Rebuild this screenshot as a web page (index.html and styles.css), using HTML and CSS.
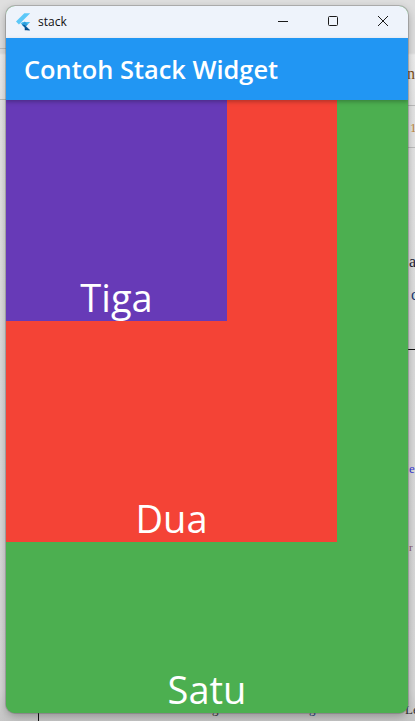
FILE: index.html
```html
<!DOCTYPE html>
<html lang="id">
<head>
<meta charset="utf-8">
<title>stack</title>
<link rel="stylesheet" href="styles.css">
</head>
<body>
<div class="desktop">
  <div class="back-line back-line-top"></div>
  <div class="back-line back-line-mid"></div>
  <div class="back-line back-line-left-a"></div>
  <div class="back-line back-line-left-b"></div>
  <div class="back-line-dark back-line-rule"></div>
  <div class="back-line-vert"></div>
  <span class="back-text back-n">n</span>
  <span class="back-text back-one">1</span>
  <span class="back-text back-a">a</span>
  <span class="back-text back-c">c</span>
  <span class="back-text back-e">e</span>
  <span class="back-text back-r">r</span>
  <span class="back-text back-le">Le</span>
  <span class="back-text back-g1">g</span>
  <span class="back-text back-g2">g</span>

  <main class="window">
    <header class="titlebar">
      <div class="title-left">
        <svg class="flutter-logo" viewBox="0 0 18 21" width="15" height="18" aria-hidden="true">
          <polygon points="0,10 10,0 17,0 3.5,13.5" fill="#5cc8f8"/>
          <polygon points="8,10.5 17,10.5 10.5,17 7,13.5 5.5,12" fill="#4dbdf0"/>
          <polygon points="7,13.5 10.5,10 14,13.5 10.5,17" fill="#2f9fdc"/>
          <polygon points="7,13.5 10.5,17 14,20.5 17,20.5 10.5,14" fill="#0d5f9e"/>
          <polygon points="10.5,17 17,20.5 10.5,20.5" fill="#0a4d87"/>
        </svg>
        <span class="app-name">stack</span>
      </div>
      <div class="controls">
        <svg class="control" viewBox="0 0 50 32" width="50" height="32" aria-hidden="true"><path d="M20 15.5H30" stroke="#1a1a1a" fill="none"/></svg>
        <svg class="control" viewBox="0 0 50 32" width="50" height="32" aria-hidden="true"><rect x="20.5" y="10.5" width="9" height="9" rx="1" stroke="#1a1a1a" fill="none"/></svg>
        <svg class="control" viewBox="0 0 50 32" width="50" height="32" aria-hidden="true"><path d="M20 10L30 20M30 10L20 20" stroke="#1a1a1a" fill="none"/></svg>
      </div>
    </header>
    <div class="appbar">Contoh Stack Widget</div>
    <div class="stack box-green">
      <div class="stack box-red">
        <div class="stack box-purple">
          <span class="label">Tiga</span>
        </div>
        <span class="label">Dua</span>
      </div>
      <span class="label">Satu</span>
    </div>
  </main>
</div>
</body>
</html>
```
FILE: styles.css
```css
* { box-sizing: border-box; }

html, body {
  margin: 0;
  padding: 0;
  width: 415px;
  height: 721px;
  overflow: hidden;
}

.desktop {
  position: relative;
  width: 415px;
  height: 721px;
  background: linear-gradient(180deg, #dfdfdf 0, #dfdfdf 53px, #efefef 55px, #e6e6e6 110px, #dcdcdc 360px, #d8d8d8 690px, #c6c6c6 721px);
  overflow: hidden;
  font-family: "Open Sans", "Noto Sans", sans-serif;
}

.back-line { position: absolute; height: 1px; background: #bdbdbd; }
.back-line-top { top: 105px; left: 400px; width: 15px; }
.back-line-mid { top: 147px; left: 400px; width: 15px; }
.back-line-left-a { top: 48px; left: 0; width: 8px; }
.back-line-left-b { top: 99px; left: 0; width: 8px; }
.back-line-dark { position: absolute; height: 1px; background: #111; left: 400px; width: 15px; }
.back-line-rule { top: 349px; }
.back-line-vert { position: absolute; left: 38px; top: 700px; width: 1px; height: 21px; background: #111; }

.back-text { position: absolute; font-family: "Liberation Serif", serif; font-size: 16px; line-height: 20px; color: #223; }
.back-n { left: 407px; top: 64px; color: #7a4a14; }
.back-one { left: 410px; top: 118px; font-size: 13px; color: #c08a3e; }
.back-a { left: 409px; top: 252px; }
.back-c { left: 411px; top: 285px; color: #1b3c78; }
.back-e { left: 409px; top: 459px; font-size: 13px; color: #3a3ad8; }
.back-r { left: 409px; top: 537px; font-size: 11px; color: #8a5a6a; }
.back-le { left: 405px; top: 700px; font-size: 13px; color: #333; }
.back-g1 { left: 212px; top: 699px; font-size: 13px; color: #333; }
.back-g2 { left: 309px; top: 699px; font-size: 13px; color: #1b3c78; }

.window {
  position: absolute;
  left: 6px;
  top: 6px;
  width: 402px;
  height: 707px;
  display: flex;
  flex-direction: column;
  border-radius: 9px;
  overflow: hidden;
  background: #4caf50;
  box-shadow: 0 0 0 1px rgba(90, 90, 90, 0.32), 0 3px 10px rgba(0, 0, 0, 0.3);
}

.titlebar {
  flex: 0 0 32px;
  display: flex;
  justify-content: space-between;
  align-items: center;
  background: #eef3fb;
}

.title-left {
  display: flex;
  align-items: center;
  gap: 7px;
  padding-left: 10px;
}

.flutter-logo { display: block; }

.app-name {
  font-size: 12px;
  line-height: 16px;
  color: #111;
}

.controls { display: flex; }
.control { display: block; }

.appbar {
  position: relative;
  z-index: 1;
  flex: 0 0 62px;
  display: flex;
  align-items: center;
  padding-left: 18px;
  background: #2196f3;
  color: #fff;
  font-size: 25.4px;
  font-weight: 600;
  box-shadow: 0 2px 4px rgba(0, 0, 0, 0.25);
}

.stack {
  display: grid;
  justify-items: center;
  align-items: end;
}

.stack > * { grid-area: 1 / 1; }
.stack > .stack { justify-self: start; align-self: start; }

.box-green { flex: 1 1 auto; background: #4caf50; }
.box-red { width: 331px; height: 442px; background: #f44336; }
.box-purple { width: 221px; height: 221px; background: #673ab7; }

.label {
  color: #fff;
  font-size: 38px;
  font-weight: 400;
  line-height: 50px;
  margin-bottom: -1px;
}
```
